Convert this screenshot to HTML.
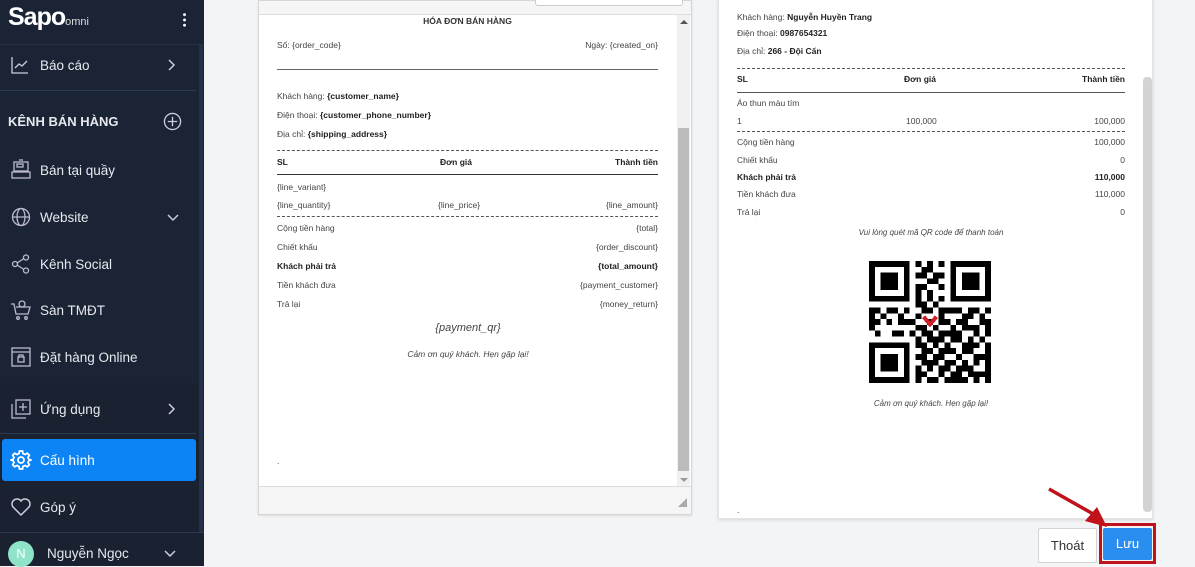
<!DOCTYPE html>
<html><head><meta charset="utf-8">
<style>
*{box-sizing:border-box;margin:0;padding:0}
body{width:1195px;height:566px;overflow:hidden;background:#f3f4f6;font-family:"Liberation Sans",Arial,sans-serif;position:relative}
.sb{position:absolute;left:0;top:0;width:204px;height:566px;background:#1b2435;color:#e6e9ee}
.sb .strip{position:absolute;left:199px;top:45px;width:4px;height:487px;background:#243047}
.it{position:absolute;left:0;width:196px;height:40px;display:flex;align-items:center;font-size:13.5px}
.it svg{position:absolute;left:10px}
.it span{position:absolute;left:40px}
.sep{position:absolute;left:0;width:196px;height:1px;background:#2e3a4f}
.t{position:absolute;font-size:8.5px;color:#444;white-space:nowrap}
.b{font-weight:bold;color:#222}
.r{text-align:right}
.dash{position:absolute;height:0;border-top:1px dashed #555}
.line{position:absolute;height:1px;background:#333}
</style></head><body>
<div class="sb">
 <div style="position:absolute;left:0;top:45px;width:199px;height:338px;background:#1b2435"></div>
 <div style="position:absolute;left:0;top:383px;width:199px;height:150px;background:#1a2232"></div>
 <div class="strip"></div>
 <div style="position:absolute;left:8px;top:3px;font-size:25px;font-weight:bold;color:#fff;letter-spacing:-1px">Sapo<span style="font-size:11px;font-weight:normal;letter-spacing:0;color:#ddd">omni</span></div>
 <div style="position:absolute;left:183px;top:12px;width:3px;height:16px;background:radial-gradient(circle,#fff 1.3px,transparent 1.6px) 0 0/3px 5.3px"></div>
 <div style="position:absolute;left:0;top:44px;width:204px;height:1px;background:#263146"></div>
 <div class="it" style="top:45px"><svg width="20" height="20" viewBox="0 0 20 20" fill="none" stroke="#ccd" stroke-width="1.3"><path d="M2 2v16h16M5 13l4-4 3 2 5-5"/></svg><span>Báo cáo</span><svg style="left:auto;right:20px" width="10" height="14" viewBox="0 0 10 14" fill="none" stroke="#ccd" stroke-width="1.5"><path d="M3 2l5 5-5 5"/></svg></div>
 <div class="sep" style="top:90px"></div>
 <div style="position:absolute;left:8px;top:114px;font-size:13px;font-weight:bold;color:#e6e9ee">KÊNH BÁN HÀNG</div>
 <svg style="position:absolute;left:163px;top:112px" width="19" height="19" viewBox="0 0 20 20" fill="none" stroke="#ccd" stroke-width="1.4"><circle cx="10" cy="10" r="8.5"/><path d="M10 5v10M5 10h10"/></svg>
 <div class="it" style="top:150px"><svg width="22" height="22" viewBox="0 0 22 22" fill="none" stroke="#bbc" stroke-width="1.3"><rect x="4" y="3" width="14" height="9"/><rect x="7" y="5" width="6" height="3"/><rect x="2" y="13" width="18" height="6"/><path d="M9 1h4"/></svg><span>Bán tại quầy</span></div>
 <div class="it" style="top:197px"><svg width="22" height="22" viewBox="0 0 22 22" fill="none" stroke="#bbc" stroke-width="1.3"><circle cx="11" cy="11" r="8.5"/><ellipse cx="11" cy="11" rx="4" ry="8.5"/><path d="M2.5 11h17"/></svg><span>Website</span><svg style="left:auto;right:16px" width="14" height="10" viewBox="0 0 14 10" fill="none" stroke="#ccd" stroke-width="1.5"><path d="M2 3l5 5 5-5"/></svg></div>
 <div class="it" style="top:244px"><svg width="22" height="22" viewBox="0 0 22 22" fill="none" stroke="#bbc" stroke-width="1.3"><circle cx="5" cy="11" r="2.5"/><circle cx="16" cy="4.5" r="2.5"/><circle cx="16" cy="17.5" r="2.5"/><path d="M7 10l7-4.5M7 12l7 4.5"/></svg><span>Kênh Social</span></div>
 <div class="it" style="top:290px"><svg width="22" height="22" viewBox="0 0 22 22" fill="none" stroke="#bbc" stroke-width="1.3"><path d="M1 5h3l2 10h12l2-7H6"/><circle cx="8" cy="19" r="1.3"/><circle cx="16" cy="19" r="1.3"/><circle cx="12" cy="5" r="3"/></svg><span>Sàn TMĐT</span></div>
 <div class="it" style="top:337px"><svg width="22" height="22" viewBox="0 0 22 22" fill="none" stroke="#bbc" stroke-width="1.3"><rect x="2" y="2" width="18" height="18"/><path d="M2 6h18"/><rect x="8" y="11" width="6" height="5"/><path d="M9 11V9h4v2"/></svg><span>Đặt hàng Online</span></div>
 <div class="it" style="top:389px"><svg width="22" height="22" viewBox="0 0 22 22" fill="none" stroke="#bbc" stroke-width="1.3"><rect x="6" y="2" width="14" height="14"/><path d="M2 6v14h14M13 5v8M9 9h8"/></svg><span>Ứng dụng</span><svg style="left:auto;right:20px" width="10" height="14" viewBox="0 0 10 14" fill="none" stroke="#ccd" stroke-width="1.5"><path d="M3 2l5 5-5 5"/></svg></div>
 <div class="sep" style="top:433px"></div>
 <div style="position:absolute;left:2px;top:439px;width:194px;height:42px;background:#0d84f5;border-radius:3px"></div>
 <div class="it" style="top:440px;color:#fff"><svg width="22" height="22" viewBox="0 0 22 22" fill="none" stroke="#fff" stroke-width="1.8"><circle cx="11" cy="11" r="3"/><path d="M9.5 2h3l.5 2.5 2 1 2.3-1.3 2 2-1.3 2.3 1 2L21.5 11l-2.5.5-1 2 1.3 2.3-2 2-2.3-1.3-2 1-.5 2.5h-3L9 17.5l-2-1-2.3 1.3-2-2L4 13.5l-1-2L.5 11 3 10.5l1-2L2.7 6.2l2-2L7 5.5l2-1z"/></svg><span>Cấu hình</span></div>
 <div class="it" style="top:487px"><svg width="22" height="22" viewBox="0 0 22 22" fill="none" stroke="#ccd" stroke-width="1.5"><path d="M11 19L3 11a4.5 4.5 0 018-6 4.5 4.5 0 018 6z"/></svg><span>Góp ý</span></div>
 <div style="position:absolute;left:0;top:532px;width:204px;height:1px;background:#2e3a4f"></div>
 <div style="position:absolute;left:0;top:533px;width:204px;height:33px;background:#1a2232"></div>
 <div style="position:absolute;left:8px;top:541px;width:26px;height:26px;border-radius:50%;background:#8fe3c9;color:#fff;font-size:13px;text-align:center;line-height:26px">N</div>
 <div style="position:absolute;left:47px;top:546px;font-size:13.5px">Nguyễn Ngọc</div>
 <svg style="position:absolute;left:163px;top:548px" width="14" height="10" viewBox="0 0 14 10" fill="none" stroke="#ccd" stroke-width="1.5"><path d="M2 3l5 5 5-5"/></svg>
</div>

<!-- left editor -->
<div style="position:absolute;left:258px;top:0;width:434px;height:515px;border:1px solid #d6d6d6;background:#f5f5f5;box-shadow:0 1px 2px rgba(0,0,0,.1)"></div>
<div style="position:absolute;left:535px;top:-4px;width:148px;height:10px;border:1px solid #ccc;border-radius:3px;background:#fff"></div>
<div style="position:absolute;left:259px;top:14px;width:432px;height:473px;background:#fff;border-top:1px solid #ddd;border-bottom:1px solid #ddd"></div>
<div style="position:absolute;left:677px;top:15px;width:13px;height:471px;background:#f1f1f1"></div>
<div style="position:absolute;left:678px;top:128px;width:11px;height:343px;background:#bcbcbc"></div>
<div style="position:absolute;left:680px;top:20px;border:4px solid transparent;border-bottom:4px solid #555;border-top:0"></div>
<div style="position:absolute;left:680px;top:478px;border:4px solid transparent;border-top:4px solid #999;border-bottom:0"></div>
<svg style="position:absolute;left:678px;top:498px" width="9" height="9"><path d="M9 0V9H0z" fill="#aaa"/></svg>

<div class="t b" style="left:277px;top:16px;width:381px;text-align:center;color:#333">HÓA ĐƠN BÁN HÀNG</div>
<div class="t" style="left:277px;top:40px">Số: {order_code}</div>
<div class="t r" style="right:537px;top:40px">Ngày: {created_on}</div>
<div class="line" style="left:277px;top:69px;width:381px;background:#666"></div>
<div class="t" style="left:277px;top:91px">Khách hàng: <b class="b">{customer_name}</b></div>
<div class="t" style="left:277px;top:110px">Điện thoại: <b class="b">{customer_phone_number}</b></div>
<div class="t" style="left:277px;top:129px">Địa chỉ: <b class="b">{shipping_address}</b></div>
<div class="dash" style="left:277px;top:150px;width:381px"></div>
<div class="t b" style="left:277px;top:157px">SL</div>
<div class="t b" style="left:440px;top:157px">Đơn giá</div>
<div class="t b" style="right:537px;top:157px">Thành tiền</div>
<div class="line" style="left:277px;top:174px;width:381px"></div>
<div class="t" style="left:277px;top:182px">{line_variant}</div>
<div class="t" style="left:277px;top:200px">{line_quantity}</div>
<div class="t" style="left:438px;top:200px">{line_price}</div>
<div class="t" style="right:537px;top:200px">{line_amount}</div>
<div class="dash" style="left:277px;top:216px;width:381px"></div>
<div class="t" style="left:277px;top:223px">Cộng tiền hàng</div><div class="t" style="right:537px;top:223px">{total}</div>
<div class="t" style="left:277px;top:242px">Chiết khấu</div><div class="t" style="right:537px;top:242px">{order_discount}</div>
<div class="t b" style="left:277px;top:261px">Khách phải trả</div><div class="t b" style="right:537px;top:261px">{total_amount}</div>
<div class="t" style="left:277px;top:280px">Tiền khách đưa</div><div class="t" style="right:537px;top:280px">{payment_customer}</div>
<div class="t" style="left:277px;top:299px">Trả lại</div><div class="t" style="right:537px;top:299px">{money_return}</div>
<div class="t" style="left:259px;width:418px;text-align:center;top:322px;font-size:11px;font-style:italic">{payment_qr}</div>
<div class="t" style="left:259px;width:418px;text-align:center;top:349px;font-style:italic">Cảm ơn quý khách. Hẹn gặp lại!</div>
<div class="t" style="left:277px;top:456px">.</div>

<!-- right preview -->
<div style="position:absolute;left:718px;top:-2px;width:435px;height:521px;background:#fff;border:1px solid #e3e3e3;box-shadow:0 1px 3px rgba(0,0,0,.12)"></div>
<div style="position:absolute;left:1143px;top:77px;width:9px;height:435px;background:#d3d3d3;border-radius:4px"></div>
<div class="t" style="left:737px;top:12px">Khách hàng: <b class="b">Nguyễn Huyền Trang</b></div>
<div class="t" style="left:737px;top:28px">Điện thoại: <b class="b">0987654321</b></div>
<div class="t" style="left:737px;top:46px">Địa chỉ: <b class="b">266 - Đội Cấn</b></div>
<div class="dash" style="left:737px;top:68px;width:388px"></div>
<div class="t b" style="left:737px;top:74px">SL</div>
<div class="t b" style="left:904px;top:74px">Đơn giá</div>
<div class="t b" style="right:70px;top:74px">Thành tiền</div>
<div class="line" style="left:737px;top:92px;width:388px;background:#555"></div>
<div class="t" style="left:737px;top:98px">Áo thun màu tím</div>
<div class="t" style="left:737px;top:116px">1</div>
<div class="t" style="left:906px;top:116px">100,000</div>
<div class="t" style="right:70px;top:116px">100,000</div>
<div class="dash" style="left:737px;top:131px;width:388px"></div>
<div class="t" style="left:737px;top:137px">Cộng tiền hàng</div><div class="t" style="right:70px;top:137px">100,000</div>
<div class="t" style="left:737px;top:155px">Chiết khấu</div><div class="t" style="right:70px;top:155px">0</div>
<div class="t b" style="left:737px;top:172px">Khách phải trả</div><div class="t b" style="right:70px;top:172px">110,000</div>
<div class="t" style="left:737px;top:189px">Tiền khách đưa</div><div class="t" style="right:70px;top:189px">110,000</div>
<div class="t" style="left:737px;top:207px">Trả lại</div><div class="t" style="right:70px;top:207px">0</div>
<div class="t" style="left:737px;width:388px;text-align:center;top:228px;font-style:italic;font-size:8px">Vui lòng quét mã QR code để thanh toán</div>
<svg id="qr" style="position:absolute;left:869px;top:261px" width="122" height="122" viewBox="0 0 21 21" shape-rendering="crispEdges"></svg>
<div class="t" style="left:737px;width:388px;text-align:center;top:399px;font-style:italic;font-size:8px">Cảm ơn quý khách. Hẹn gặp lại!</div>
<div class="t" style="left:737px;top:505px">.</div>

<div style="position:absolute;left:1038px;top:528px;width:59px;height:35px;border:1px solid #d4d4d4;background:#fff;border-radius:2px;font-size:13px;color:#333;text-align:center;line-height:33px">Thoát</div>
<div style="position:absolute;left:1099px;top:523px;width:57px;height:41px;border:3px solid #c0121a"></div>
<div style="position:absolute;left:1103px;top:528px;width:49px;height:32px;background:#2a8ef0;border-radius:2px;font-size:13px;color:#fff;text-align:center;line-height:32px">Lưu</div>
<svg style="position:absolute;left:1045px;top:485px" width="65" height="45"><path d="M4 4L50 30" stroke="#c0121a" stroke-width="3.5"/><path d="M40 36L62 42 52 22z" fill="#c0121a"/></svg>

<script>
var rows=["111111101010101111111","100000100110001000001","101110101101101011101","101110100011001011101","101110101100101011101","100000101010001000001","111111101010101111111","000000001101000000000","110110100110111101101","101001001000100011010","110101110010110110011","100000001101001011101","010011010110111100101","000000001011101101010","111111101101010011101","100000100110111011001","101110101101100100111","101110100111011010101","101110101010110111001","100000101100101101111","111111101011011110101"];
var s='';for(var y=0;y<21;y++)for(var x=0;x<21;x++)if(rows[y][x]=='1')s+='<rect x="'+x+'" y="'+y+'" width="1" height="1"/>';
s+='<path d="M9.4 9.6l1.1 1.3 1.1-1.3" stroke="#d0202a" stroke-width=".7" fill="none"/>';
document.getElementById('qr').innerHTML=s;
</script>
</body></html>
